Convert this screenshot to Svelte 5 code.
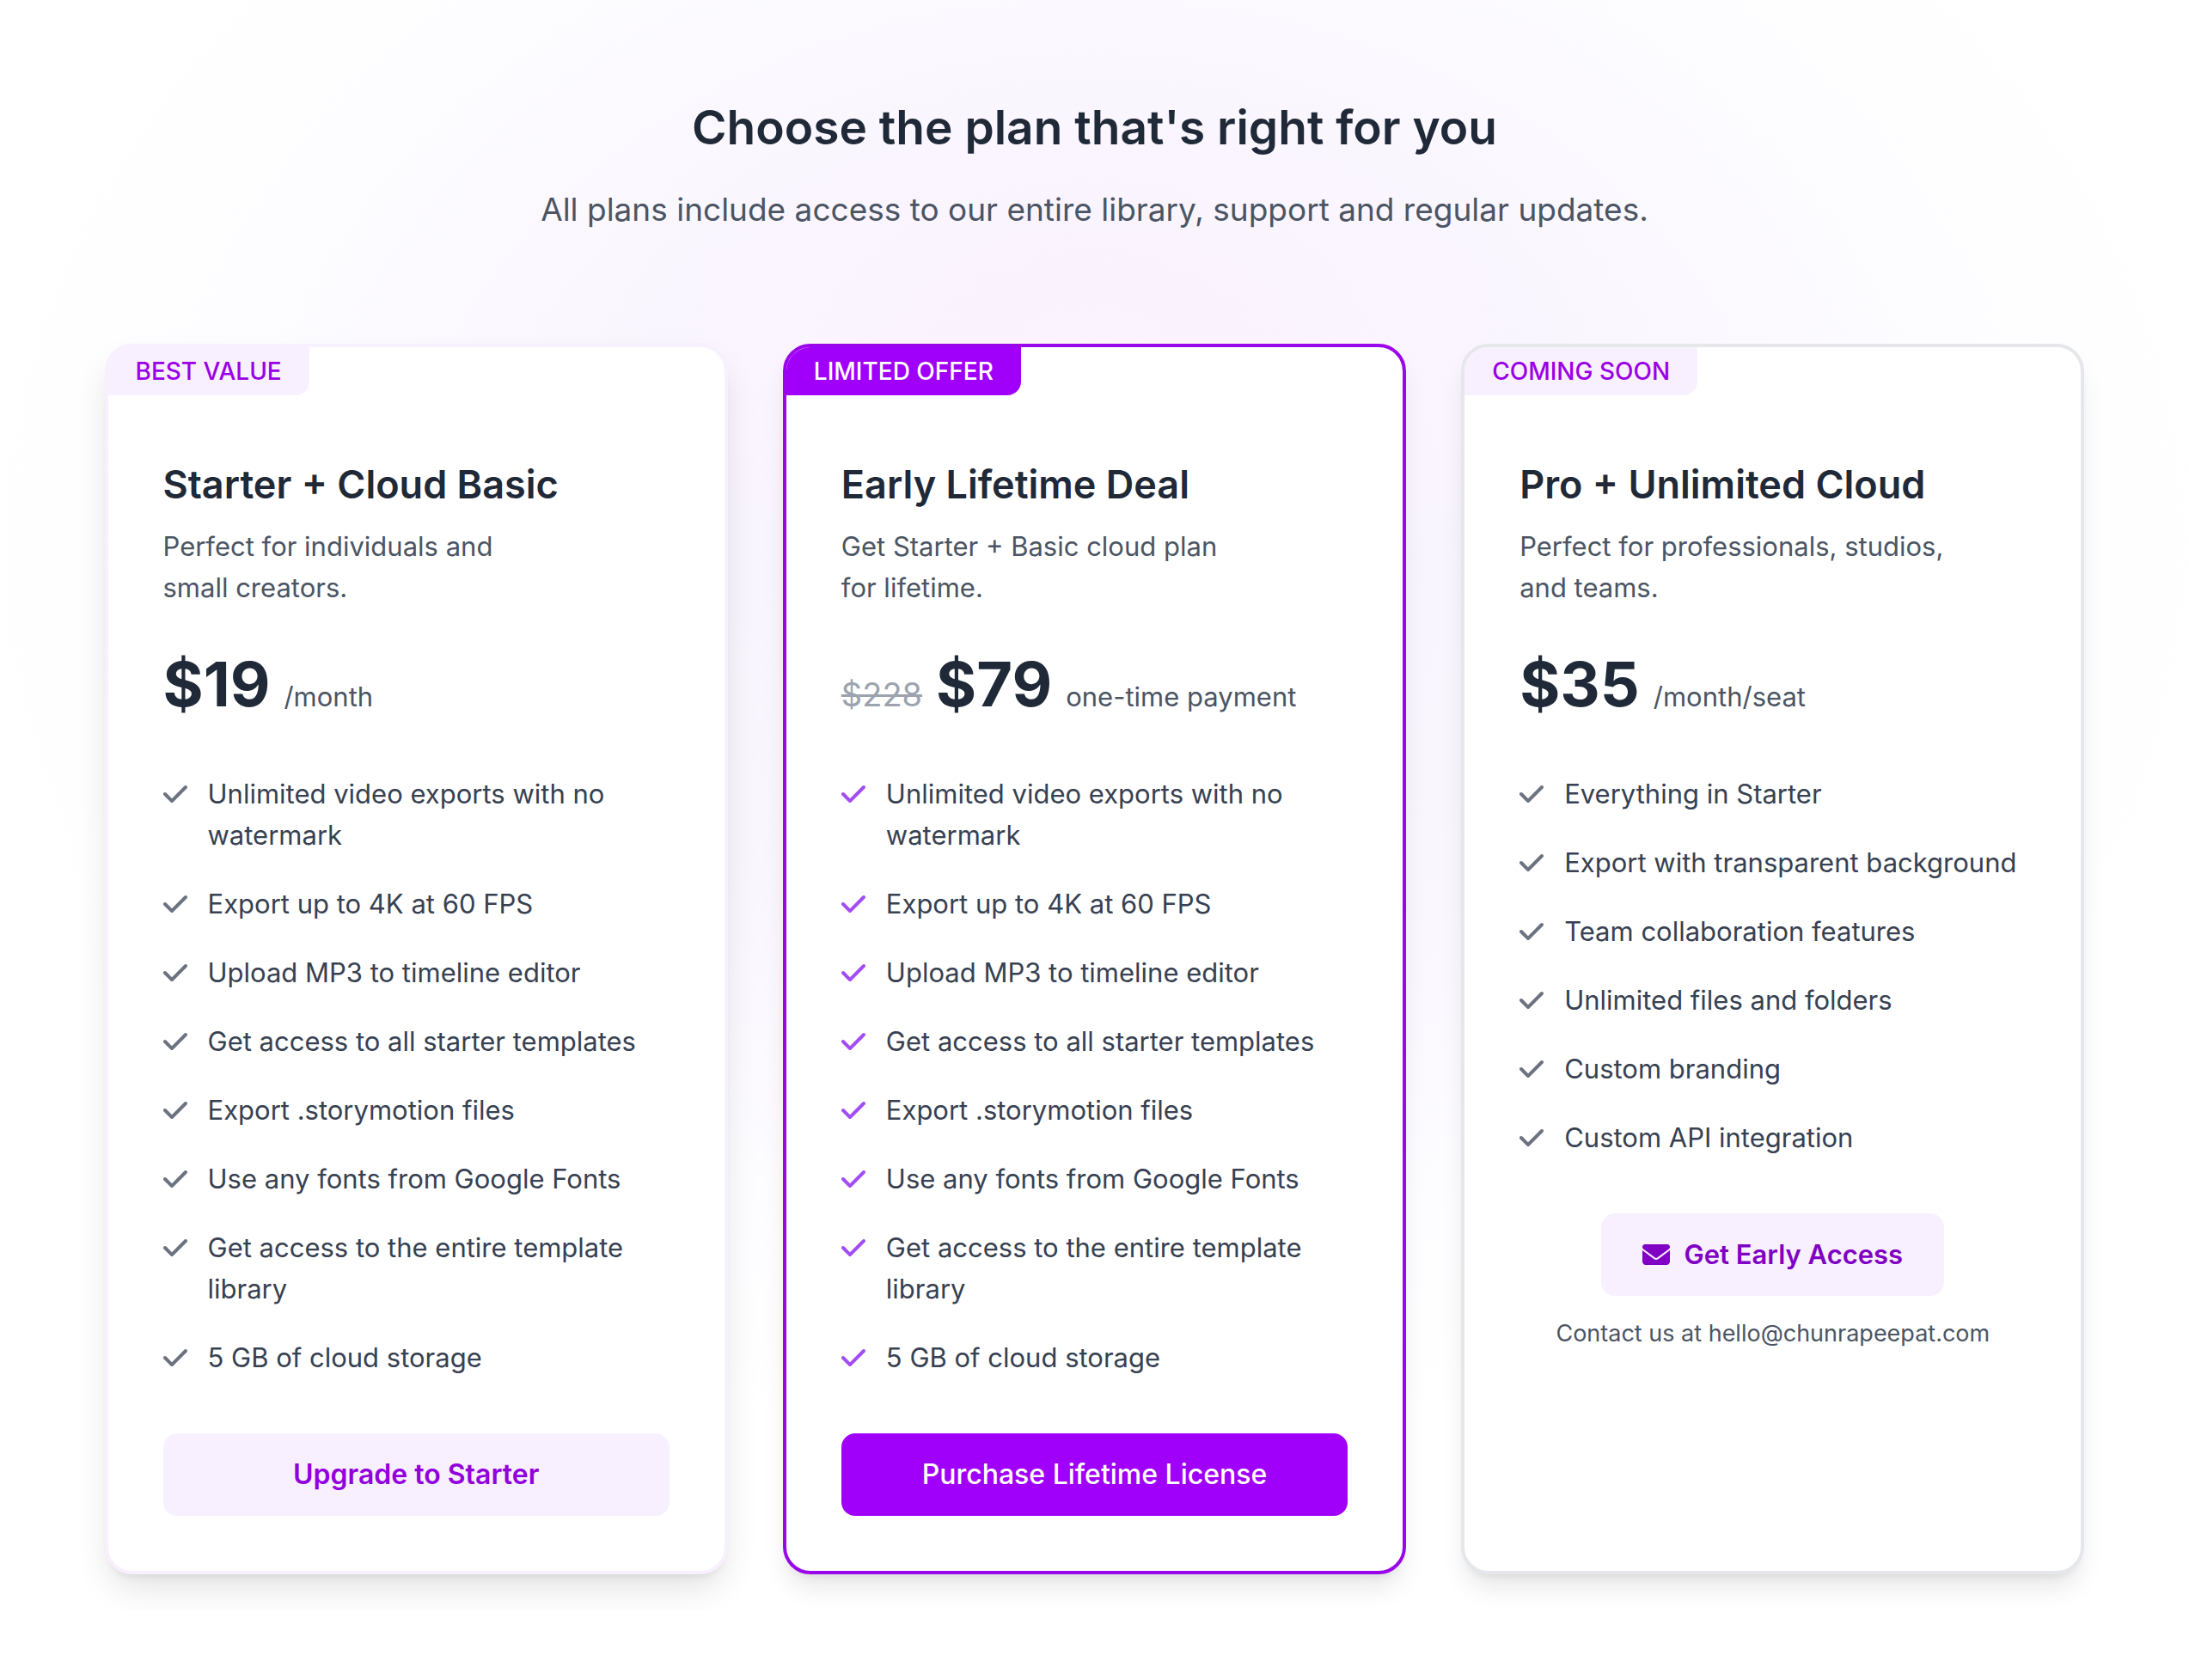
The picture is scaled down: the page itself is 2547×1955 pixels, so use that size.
<script lang="ts">
  interface Plan {
    id: string;
    badge: string;
    name: string;
    description: string[];
    oldPrice?: string;
    price: string;
    period: string;
    features: string[];
    action: string;
    contact?: string;
  }

  const starterFeatures = [
    "Unlimited video exports with no watermark",
    "Export up to 4K at 60 FPS",
    "Upload MP3 to timeline editor",
    "Get access to all starter templates",
    "Export .storymotion files",
    "Use any fonts from Google Fonts",
    "Get access to the entire template library",
    "5 GB of cloud storage",
  ];

  const plans: Plan[] = [
    {
      id: "starter",
      badge: "BEST VALUE",
      name: "Starter + Cloud Basic",
      description: ["Perfect for individuals and", "small creators."],
      price: "$19",
      period: "/month",
      features: starterFeatures,
      action: "Upgrade to Starter",
    },
    {
      id: "lifetime",
      badge: "LIMITED OFFER",
      name: "Early Lifetime Deal",
      description: ["Get Starter + Basic cloud plan", "for lifetime."],
      oldPrice: "$228",
      price: "$79",
      period: "one-time payment",
      features: starterFeatures,
      action: "Purchase Lifetime License",
    },
    {
      id: "pro",
      badge: "COMING SOON",
      name: "Pro + Unlimited Cloud",
      description: ["Perfect for professionals, studios,", "and teams."],
      price: "$35",
      period: "/month/seat",
      features: [
        "Everything in Starter",
        "Export with transparent background",
        "Team collaboration features",
        "Unlimited files and folders",
        "Custom branding",
        "Custom API integration",
      ],
      action: "Get Early Access",
      contact: "Contact us at hello@chunrapeepat.com",
    },
  ];
</script>

<section class="pricing">
  <header class="intro">
    <h1>Choose the plan that's right for you</h1>
    <p>All plans include access to our entire library, support and regular updates.</p>
  </header>

  <div class="plans">
    {#each plans as plan (plan.id)}
      <article class="card card-{plan.id}">
        <span class="badge">{plan.badge}</span>
        <h2>{plan.name}</h2>
        <p class="description">
          {#each plan.description as line}
            <span>{line}</span>
          {/each}
        </p>
        <p class="price">
          {#if plan.oldPrice}<s>{plan.oldPrice}</s>{/if}
          <strong>{plan.price}</strong>
          <span>{plan.period}</span>
        </p>

        <ul class="features">
          {#each plan.features as feature}
            <li>
              <svg class="check" viewBox="0 0 448 512" aria-hidden="true">
                <path d="M438.6 105.4c12.5 12.5 12.5 32.8 0 45.3l-256 256c-12.5 12.5-32.8 12.5-45.3 0l-128-128c-12.5-12.5-12.5-32.8 0-45.3s32.8-12.5 45.3 0L160 338.7 393.4 105.4c12.5-12.5 32.8-12.5 45.3 0z" />
              </svg>
              <span>{feature}</span>
            </li>
          {/each}
        </ul>

        <button type="button" class="action">
          {#if plan.contact}
            <svg class="envelope" viewBox="0 0 512 512" aria-hidden="true">
              <path d="M48 64C21.5 64 0 85.5 0 112c0 15.1 7.1 29.3 19.2 38.4L236.8 313.6c11.4 8.5 27 8.5 38.4 0L492.8 150.4c12.1-9.1 19.2-23.3 19.2-38.4c0-26.5-21.5-48-48-48H48zM0 176V384c0 35.3 28.7 64 64 64H448c35.3 0 64-28.7 64-64V176L294.4 339.2c-22.8 17.1-54 17.1-76.8 0L0 176z" />
            </svg>
          {/if}
          {plan.action}
        </button>
        {#if plan.contact}
          <p class="contact">{plan.contact}</p>
        {/if}
      </article>
    {/each}
  </div>
</section>

<style>
  :global(body) {
    margin: 0;
    background: #fff;
  }

  .pricing {
    --purple: #a000fa;
    --purple-border: #9a06ea;
    --purple-light: #f8f0fe;
    --ink: #1f2937;
    --muted: #4b5563;
    padding: 112px 32px 42px;
    overflow: hidden;
    font-family: Inter, "Liberation Sans", sans-serif;
    color: var(--ink);
    background:
      radial-gradient(ellipse 26% 22% at 50% 22%, #fbf3fe 0%, transparent 100%),
      radial-gradient(ellipse 52% 56% at 50% 34%, #f7f4fe 0%, #f9f6fe 45%, #fdfcff 76%, #fff 100%);
  }

  h1,
  h2,
  p,
  ul {
    margin: 0;
    padding: 0;
  }

  /* Heading */
  .intro {
    margin-bottom: 128px;
    text-align: center;
  }
  .intro h1 {
    font-size: 55px;
    font-weight: 600;
    line-height: 72px;
  }
  .intro p {
    margin-top: 32px;
    font-size: 37px;
    line-height: 56px;
    color: var(--muted);
  }

  /* Cards */
  .plans {
    display: grid;
    grid-template-columns: repeat(3, 1fr);
    gap: 64px;
    max-width: 2304px;
    margin: 0 auto;
  }
  .card {
    position: relative;
    display: flex;
    flex-direction: column;
    padding: 128px 64px 64px;
    border: 4px solid var(--purple-light);
    border-radius: 32px;
    background: #fff;
    box-shadow: 0 20px 30px -6px rgb(0 0 0 / 10%), 0 8px 12px -8px rgb(0 0 0 / 10%);
  }
  .card-starter {
    box-shadow: 0 20px 40px -6px rgb(0 0 0 / 12%), 0 8px 12px -8px rgb(0 0 0 / 12%);
  }
  .card-lifetime { border-color: var(--purple-border); }
  .card-pro { border-color: #e5e7eb; }

  .badge {
    position: absolute;
    top: 0;
    left: 0;
    padding: 8px 32px;
    border-radius: 28px 0 16px 0;
    font-size: 28px;
    font-weight: 500;
    line-height: 40px;
    color: #9a00e6;
    background: var(--purple-light);
  }
  .card-lifetime .badge {
    color: #fff;
    background: var(--purple);
  }

  h2 {
    font-size: 45px;
    font-weight: 600;
    line-height: 64px;
  }
  .description {
    margin-top: 16px;
    font-size: 31px;
    line-height: 48px;
    color: var(--muted);
  }
  .description span { display: block; }

  .price {
    display: flex;
    align-items: baseline;
    gap: 16px;
    margin: 48px 0 64px;
    font-size: 31px;
    line-height: 48px;
    color: var(--muted);
  }
  .price s {
    font-size: 38px;
    color: #9ca3af;
  }
  .price strong {
    font-size: 72px;
    font-weight: 700;
    line-height: 80px;
    color: var(--ink);
  }

  .features {
    display: grid;
    gap: 32px;
    margin-bottom: 64px;
    font-size: 31px;
    line-height: 48px;
    color: #374151;
    list-style: none;
  }
  .features li {
    display: flex;
    gap: 24px;
  }
  .check {
    flex: none;
    width: 28px;
    height: 32px;
    margin-top: 8px;
    fill: #6b7280;
  }
  .card-lifetime .check { fill: #a34cf5; }

  /* Actions */
  .action {
    display: flex;
    align-items: center;
    justify-content: center;
    gap: 16px;
    padding: 24px 48px;
    border: 0;
    border-radius: 16px;
    font: inherit;
    font-size: 32px;
    font-weight: 600;
    line-height: 48px;
    color: #9200dc;
    background: var(--purple-light);
    cursor: pointer;
  }
  .card-lifetime .action {
    font-weight: 500;
    color: #fff;
    background: var(--purple);
  }
  .card-pro .action {
    align-self: center;
    font-size: 31px;
    color: #8000c4;
  }
  .envelope {
    width: 32px;
    height: 32px;
    fill: currentColor;
  }
  .contact {
    margin-top: 24px;
    font-size: 27px;
    line-height: 40px;
    text-align: center;
    color: var(--muted);
  }
</style>
